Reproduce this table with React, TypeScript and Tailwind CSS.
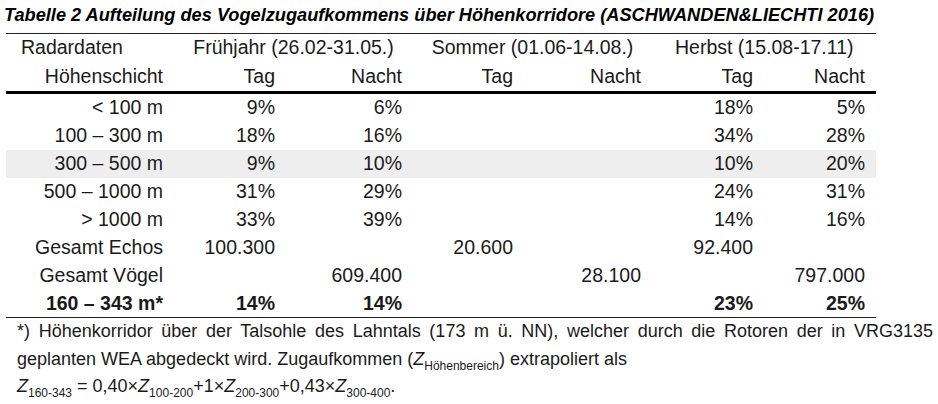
import React from "react";

const COLS = "grid grid-cols-[168px_112px_127px_111px_128px_112px_112px]";

type Row = { cells: string[]; gray?: boolean; bold?: boolean; h: string };

const rows: Row[] = [
  { cells: ["< 100 m", "9%", "6%", "", "", "18%", "5%"], h: "h-[28px]" },
  { cells: ["100 – 300 m", "18%", "16%", "", "", "34%", "28%"], h: "h-[28px]" },
  { cells: ["300 – 500 m", "9%", "10%", "", "", "10%", "20%"], gray: true, h: "h-[28px]" },
  { cells: ["500 – 1000 m", "31%", "29%", "", "", "24%", "31%"], h: "h-[28px]" },
  { cells: ["> 1000 m", "33%", "39%", "", "", "14%", "16%"], h: "h-[28px]" },
  { cells: ["Gesamt Echos", "100.300", "", "20.600", "", "92.400", ""], h: "h-[28px]" },
  { cells: ["Gesamt Vögel", "", "609.400", "", "28.100", "", "797.000"], h: "h-[28px]" },
  { cells: ["160 – 343 m*", "14%", "14%", "", "", "23%", "25%"], bold: true, h: "h-[27px]" },
];

export default function App() {
  return (
    <div className="w-[938px] h-[404px] bg-white text-[#1a1a1a] overflow-hidden font-['Liberation_Sans',Arial,sans-serif]">
      <div className="h-[33px] pl-[4px] pt-[4px]">
        <div className="text-[18.2px] leading-[22px] font-bold italic text-black whitespace-nowrap">
          Tabelle 2 Aufteilung des Vogelzugaufkommens über Höhenkorridore (ASCHWANDEN&amp;LIECHTI 2016)
        </div>
      </div>
      <div className="ml-[6px] w-[870px] text-[19.5px]">
        <div className="border-t border-[#222] border-b-[3px] border-b-black">
          <div className={`${COLS} h-[28px] items-center leading-none`}>
            <div className="pl-[15px]">Radardaten</div>
            <div className="col-span-2 text-center">Frühjahr (26.02-31.05.)</div>
            <div className="col-span-2 text-center">Sommer (01.06-14.08.)</div>
            <div className="col-span-2 pl-[23px]">Herbst (15.08-17.11)</div>
          </div>
          <div className={`${COLS} h-[29px] items-center leading-none text-right`}>
            <div className="pr-[11px]">Höhenschicht</div>
            <div className="pr-[11px]">Tag</div>
            <div className="pr-[11px]">Nacht</div>
            <div className="pr-[11px]">Tag</div>
            <div className="pr-[11px]">Nacht</div>
            <div className="pr-[11px]">Tag</div>
            <div className="pr-[11px]">Nacht</div>
          </div>
        </div>
        <div className="border-b border-[#222]">
          {rows.map((r, i) => (
            <div
              key={i}
              className={`${COLS} ${r.h} items-center leading-none text-right ${r.gray ? "bg-[#eeeeee]" : ""} ${r.bold ? "font-bold" : ""}`}
            >
              {r.cells.map((c, j) => (
                <div key={j} className="pr-[11px]">
                  {c}
                </div>
              ))}
            </div>
          ))}
        </div>
      </div>
      <div className="ml-[17px] w-[916px] text-[18px] text-[#1a1a1a]">
        <div className="h-[27px] leading-[27px] text-justify [text-align-last:justify]">
          *) Höhenkorridor über der Talsohle des Lahntals (173 m ü. NN), welcher durch die Rotoren der in VRG3135
        </div>
        <div className="h-[28px] leading-[28px]">
          geplanten WEA abgedeckt wird. Zugaufkommen (<span className="italic">Z</span>
          <sub className="text-[12px] align-[-2px]">Höhenbereich</sub>) extrapoliert als
        </div>
        <div className="h-[27px] leading-[27px]">
          <span className="italic">Z</span>
          <sub className="text-[12px] align-[-2px]">160-343</sub> = 0,40×<span className="italic">Z</span>
          <sub className="text-[12px] align-[-2px]">100-200</sub>+1×<span className="italic">Z</span>
          <sub className="text-[12px] align-[-2px]">200-300</sub>+0,43×<span className="italic">Z</span>
          <sub className="text-[12px] align-[-2px]">300-400</sub>.
        </div>
      </div>
    </div>
  );
}
